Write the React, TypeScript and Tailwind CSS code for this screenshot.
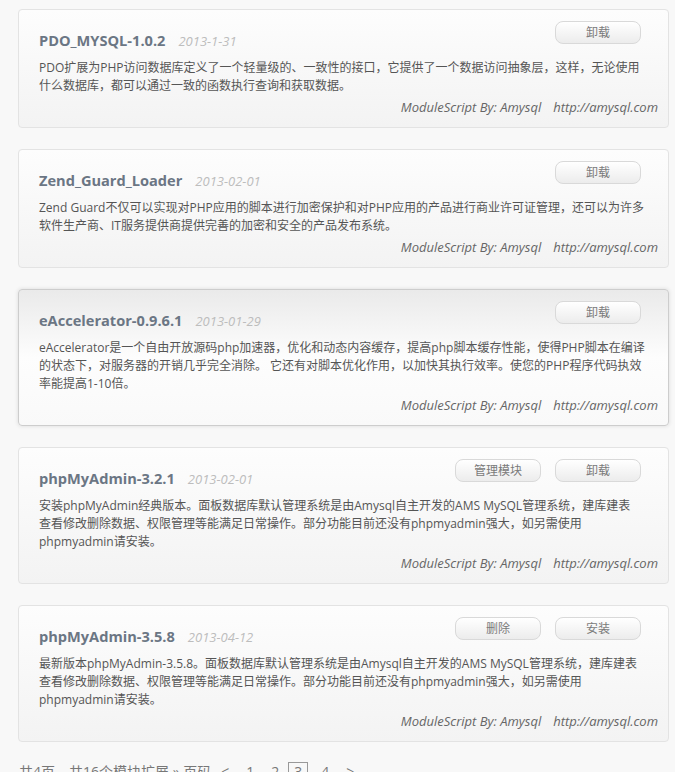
import React from "react";

type Mod = {
  title: string;
  date: string;
  buttons: string[];
  lines: string[];
  active?: boolean;
};

const mods: Mod[] = [
  {
    title: "PDO_MYSQL-1.0.2",
    date: "2013-1-31",
    buttons: ["卸载"],
    lines: [
      "PDO扩展为PHP访问数据库定义了一个轻量级的、一致性的接口，它提供了一个数据访问抽象层，这样，无论使用",
      "什么数据库，都可以通过一致的函数执行查询和获取数据。",
    ],
  },
  {
    title: "Zend_Guard_Loader",
    date: "2013-02-01",
    buttons: ["卸载"],
    lines: [
      "Zend Guard不仅可以实现对PHP应用的脚本进行加密保护和对PHP应用的产品进行商业许可证管理，还可以为许多",
      "软件生产商、IT服务提供商提供完善的加密和安全的产品发布系统。",
    ],
  },
  {
    title: "eAccelerator-0.9.6.1",
    date: "2013-01-29",
    buttons: ["卸载"],
    active: true,
    lines: [
      "eAccelerator是一个自由开放源码php加速器，优化和动态内容缓存，提高php脚本缓存性能，使得PHP脚本在编译",
      "的状态下，对服务器的开销几乎完全消除。 它还有对脚本优化作用，以加快其执行效率。使您的PHP程序代码执效",
      "率能提高1-10倍。",
    ],
  },
  {
    title: "phpMyAdmin-3.2.1",
    date: "2013-02-01",
    buttons: ["管理模块", "卸载"],
    lines: [
      "安装phpMyAdmin经典版本。面板数据库默认管理系统是由Amysql自主开发的AMS MySQL管理系统，建库建表",
      "查看修改删除数据、权限管理等能满足日常操作。部分功能目前还没有phpmyadmin强大，如另需使用",
      "phpmyadmin请安装。",
    ],
  },
  {
    title: "phpMyAdmin-3.5.8",
    date: "2013-04-12",
    buttons: ["删除", "安装"],
    lines: [
      "最新版本phpMyAdmin-3.5.8。面板数据库默认管理系统是由Amysql自主开发的AMS MySQL管理系统，建库建表",
      "查看修改删除数据、权限管理等能满足日常操作。部分功能目前还没有phpmyadmin强大，如另需使用",
      "phpmyadmin请安装。",
    ],
  },
];

function Card({ m }: { m: Mod }) {
  const base =
    "rounded-[4px] border pl-[20px] pr-[10px] pt-[11px] pb-[11px]";
  const cls = m.active
    ? base +
      " border-[#cdcdcd] bg-gradient-to-b from-[#eaeaea] via-[#fdfdfd] to-[#f9f9f9] shadow-[0_0_4px_rgba(0,0,0,0.12)]"
    : base + " border-[#e3e3e3] bg-gradient-to-b from-[#fdfdfd] to-[#f3f3f3]";
  return (
    <div className={cls}>
      <div className="flex items-start justify-between pr-[17px]">
        <div className="mt-[9px] flex h-[20px] items-baseline">
          <span className="text-[14.6px] font-bold leading-[20px] text-[#6b7684]">
            {m.title}
          </span>
          <span className="ml-[13px] text-[13px] italic leading-[20px] text-[#bdbdbd]">
            {m.date}
          </span>
        </div>
        <div className="flex gap-[14px]">
          {m.buttons.map((b) => (
            <button
              key={b}
              className="h-[23px] w-[86px] rounded-[8px] border border-[#d9d9d9] bg-gradient-to-b from-[#ffffff] to-[#ececec] text-[12px] leading-[21px] text-[#7a7a7a]"
            >
              {b}
            </button>
          ))}
        </div>
      </div>
      <div className="mt-[9px] text-[12px] leading-[18px] text-[#555555]">
        {m.lines.map((l, i) => (
          <div key={i} className="whitespace-nowrap">
            {l}
          </div>
        ))}
      </div>
      <div className="mt-[3px] text-right text-[13px] italic leading-[18px] text-[#666666]">
        ModuleScript By: Amysql<span className="ml-[12px]">http://amysql.com</span>
      </div>
    </div>
  );
}

export default function App() {
  return (
    <div
      className="min-h-[772px] bg-[#f8f8f8] pt-[9px] pl-[18px] pr-[6px]"
      style={{ fontFamily: "'Open Sans', 'Noto Sans CJK SC', sans-serif" }}
    >
      <div className="flex flex-col gap-[21px]">
        {mods.map((m) => (
          <Card key={m.title} m={m} />
        ))}
      </div>
      <div className="mt-[20px] flex items-center pl-[1px] text-[14px] leading-[20px] text-[#777777]">
        <span>共4页，共16个模块扩展 » 页码</span>
        <span className="ml-[10px]">&lt;</span>
        <span className="ml-[17px]">1</span>
        <span className="ml-[17px]">2</span>
        <span className="ml-[9px] border border-[#999999] px-[5px] leading-[18px]">3</span>
        <span className="ml-[13px]">4</span>
        <span className="ml-[17px]">&gt;</span>
      </div>
    </div>
  );
}
